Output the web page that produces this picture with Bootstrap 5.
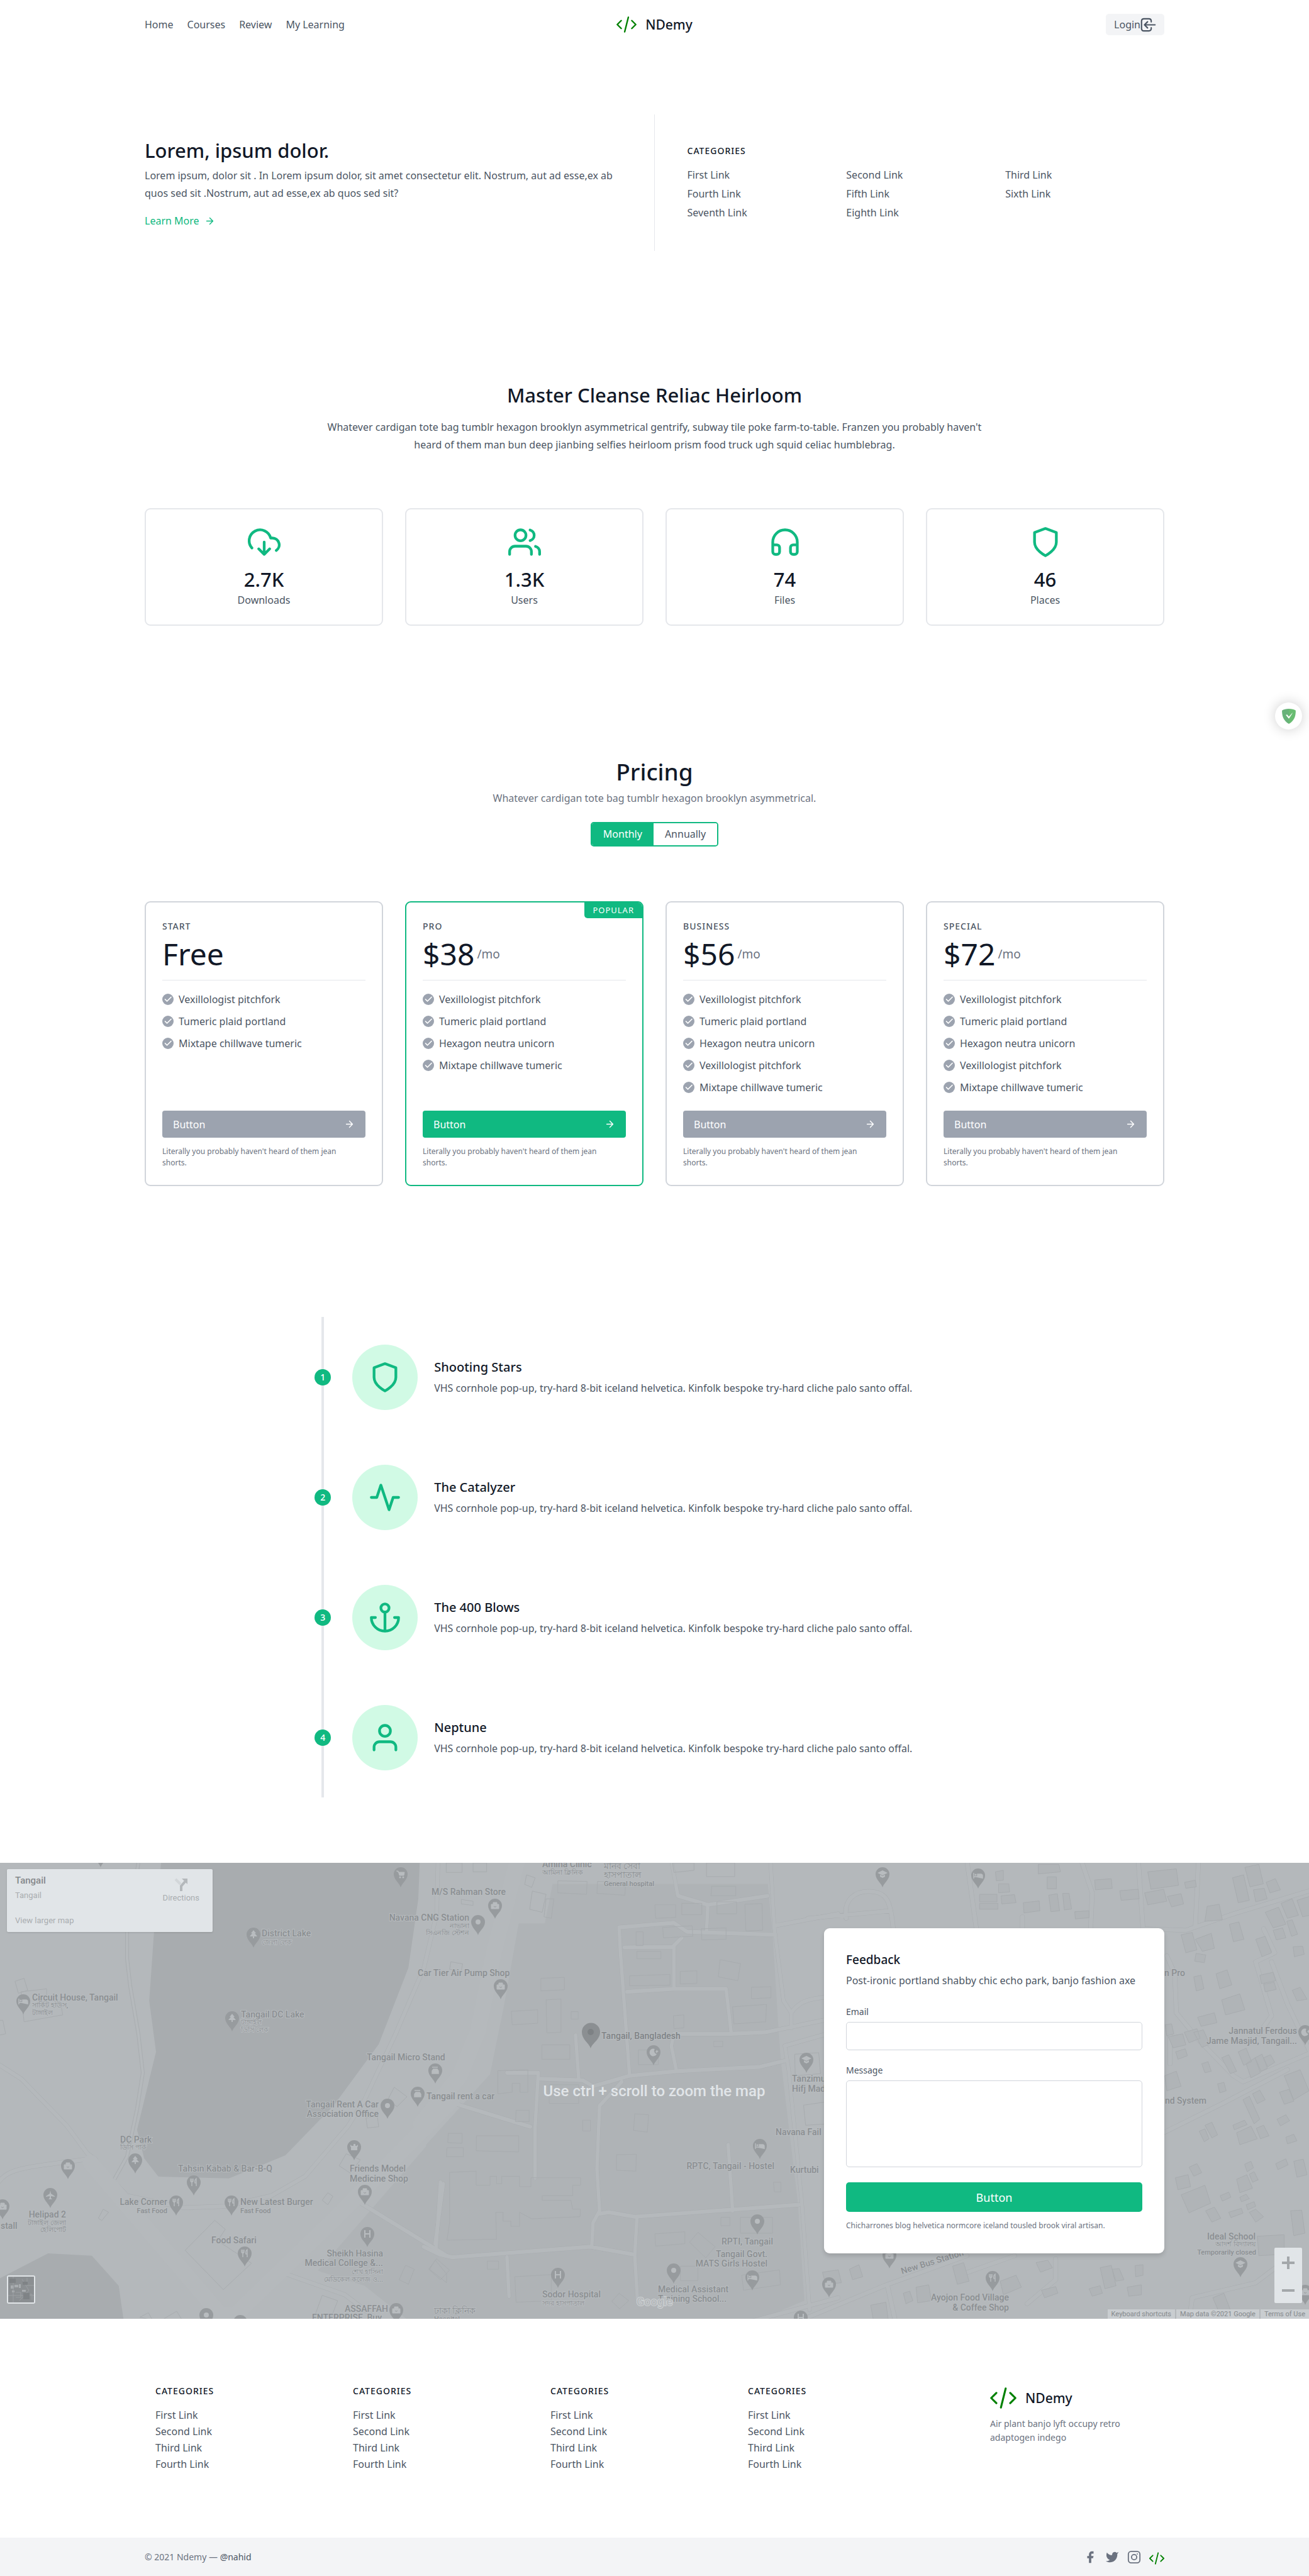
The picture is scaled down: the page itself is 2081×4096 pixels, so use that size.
<!DOCTYPE html>
<html lang="en">
<head>
<meta charset="utf-8">
<meta name="viewport" content="width=device-width, initial-scale=1">
<title>NDemy</title>
<link href="https://cdn.jsdelivr.net/npm/bootstrap@5.3.0/dist/css/bootstrap.min.css" rel="stylesheet">
<style>
:root{--brand:#10b981;--ink:#111827;--body:#4b5563;--soft:#6b7280;--line:#e5e7eb;--edge:#d1d5db;--mute:#9ca3af}
body{font-family:"Noto Sans","Open Sans",sans-serif;font-size:16px;line-height:28px;color:var(--body);background:#fff}
a{color:inherit;text-decoration:none}
h1,h2,h3,p,ul{margin:0}
.wrap{width:100%;max-width:1665px;margin:0 auto;padding:0 22px}
.side{flex:1}
.top-bar{padding-top:22px;padding-bottom:22px}
.top-nav{gap:22px;line-height:34px}
.brand-name{font-size:21px;font-weight:500;line-height:32px;color:var(--ink)}
.brand-link{gap:14px}
.login-btn{height:34px;padding:0 13px;background:#f3f4f6;border:0;border-radius:5px;color:var(--body);font-size:16px;line-height:34px}
.section-gap{padding-top:104px;padding-bottom:104px}
.title-lg{font-size:31px;line-height:42px;font-weight:500;color:var(--ink)}
.title-xl{font-size:37px;line-height:48px;font-weight:500;color:var(--ink)}
.eyebrow{font-size:14px;line-height:22px;font-weight:500;letter-spacing:1px;color:var(--ink)}
.hero-row{min-height:217px}
.hero-left{padding-right:52px;border-right:1px solid var(--line)}
.hero-right{padding-left:52px}
.hero-left h1{margin-bottom:5px}
.more{margin-top:18px;line-height:24px;color:var(--brand);gap:8px}
.cat-links{margin-top:12px;line-height:30px}
.narrow{width:66.667%;margin-left:auto;margin-right:auto}
.grid4{display:grid;grid-template-columns:repeat(4,1fr);gap:35px;margin-top:87px}
.stat{border:2px solid var(--line);border-radius:9px;padding:26px 17px;color:var(--body);line-height:26px}
.stat svg{margin-bottom:14px}
.stat-num{font-size:31px;line-height:39px;font-weight:500;color:var(--ink)}
.ico{fill:none;stroke:currentColor;stroke-width:2;stroke-linecap:round;stroke-linejoin:round;color:var(--brand)}
.toggle{border:2px solid var(--brand);border-radius:5px;height:39px;overflow:hidden}
.toggle button{border:0;background:#fff;color:var(--body);padding:0 18px;font-size:16px;line-height:35px}
.toggle button.on{background:var(--brand);color:#fff}
.plan{border:2px solid var(--edge);border-radius:9px;padding:26px;position:relative;overflow:hidden}
.plan.hot{border-color:var(--brand)}
.plan h3{font-size:14px;line-height:24px;font-weight:500;letter-spacing:1px;color:var(--body)}
.price{font-size:48px;line-height:52px;margin-top:6px;padding-bottom:15px;margin-bottom:18px;border-bottom:1px solid var(--line);color:var(--ink)}
.per{font-size:19px;color:var(--soft);line-height:24px;margin-left:4px}
.perks{list-style:none;padding:0;margin-bottom:25px}
.perks li{line-height:24px;margin-bottom:11px;gap:8px}
.perks li:last-child{margin-bottom:0}
.plan-btn{margin-top:auto;height:43px;border:0;border-radius:4px;background:var(--mute);color:#fff;padding:0 17px;font-size:16px}
.hot .plan-btn,.send{background:var(--brand)}
.fine{font-size:12px;line-height:18px;color:var(--soft)}
.plan .fine{margin-top:13px;padding-right:22px}
.tag{position:absolute;right:0;top:0;background:var(--brand);color:#fff;font-size:13px;line-height:25px;letter-spacing:1px;padding:0 13px;border-bottom-left-radius:5px}
.step{height:191px;gap:26px}
.rail{width:26px;align-self:stretch;background:linear-gradient(var(--line),var(--line)) center/4px 100% no-repeat}
.dot{width:26px;height:26px;border-radius:50%;background:var(--brand);color:#fff;font-size:14px;font-weight:500;line-height:26px}
.disc{width:104px;height:104px;border-radius:50%;background:#d1fae5;margin-left:8px}
.step h3{font-size:20px;line-height:30px;font-weight:500;color:var(--ink);margin-bottom:4px}
.map-zone{position:relative;padding:104px 0;background:#b4b8bb;overflow:hidden}
.map-art{position:absolute;inset:0;width:100%;height:100%;font-family:Roboto,sans-serif}
.map-card{position:absolute;left:11px;top:10px;width:327px;height:100px;background:#e1e5e8;border-radius:2px;box-shadow:0 1px 3px #0002;font-family:Roboto,sans-serif;font-size:13px;line-height:20px;color:#a9adb0;padding:8px 21px 8px 13px}
.map-card strong{font-size:15px;font-weight:500;color:#85898c}
.directions{padding-top:6px}
.zoomer{position:absolute;right:11px;top:612px;width:44px;height:88px;background:#e1e5e8;border-radius:2px}
.zoomer button{border:0;background:none;height:44px;padding:0}
.credits{position:absolute;right:0;bottom:0;font-family:Roboto,sans-serif;font-size:11px;line-height:15px;color:#85898c;gap:2px}
.credits span,.credits a{background:#c9cdd0;padding:0 6px}
.sat{position:absolute;left:11px;bottom:24px;width:45px;height:45px;border:2px solid #e1e5e8;border-radius:3px;background:#8f9396;overflow:hidden}
.sat svg{display:block}
.feedback{width:541px;background:#fff;border-radius:9px;padding:35px;box-shadow:0 4px 7px #0002;position:relative}
.feedback h2{font-size:19px;line-height:30px;font-weight:500;color:var(--ink);margin-bottom:4px}
.feedback .intro{margin-bottom:23px}
.feedback label{display:block;font-size:14px;line-height:26px;margin-bottom:3px}
.feedback .form-control{border:1px solid var(--edge);border-radius:5px;height:45px;margin-bottom:19px}
.feedback textarea.form-control{height:138px;margin-bottom:24px;resize:none}
.feedback .fine{margin-top:13px}
.send{height:47px;border:0;border-radius:5px;color:#fff;font-size:18px}
.foot-col{width:314px;padding:0 17px}
.foot-col ul{list-style:none;padding:0;margin-top:14px;line-height:26px}
.foot-brand{width:277px;font-size:14px;line-height:22px;color:var(--soft);padding-top:5px}
.foot-brand p{margin-top:13px}
.foot-end{background:#f3f4f6;height:61px;font-size:14px;color:var(--soft)}
.foot-end p a{color:var(--body)}
.social{gap:13px}
.guard{position:absolute;right:11px;top:1117px;width:43px;height:43px;border-radius:50%;background:#fff;box-shadow:0 0 20px #0003}
.rd path,.rd{fill:none;stroke-linejoin:round;stroke-linecap:round}
.rd path{vector-effect:non-scaling-stroke}
.casing{stroke:#a9adb0}.paving{stroke:#b5b9bc}
.lot path{fill:#b0b4b7;stroke:#a8acaf;vector-effect:non-scaling-stroke}
.lot .bare{fill:none}
.lab{font-size:14px;font-weight:500;fill:#8b8f92;stroke:#b8bcbf;stroke-width:2px;paint-order:stroke}
.lab .sub{font-size:11px}
.lab .main-place{fill:#7f8386}
.e{text-anchor:end}
</style>
<script src="https://cdn.jsdelivr.net/npm/bootstrap@5.3.0/dist/js/bootstrap.bundle.min.js"></script>
</head>
<body class="position-relative">
<svg width="0" height="0" class="position-absolute" aria-hidden="true">
<defs>
<symbol id="code" viewBox="0 0 132 108"><path d="M31 28 5 54 31 80M78 6 54 102M101 28 127 54 101 80" fill="none" stroke="green" stroke-width="10" stroke-linecap="round" stroke-linejoin="round"/></symbol>
<symbol id="shield" viewBox="0 0 24 24"><path d="M12 22s8-4 8-10V5l-8-3-8 3v7c0 6 8 10 8 10z"/></symbol>
<symbol id="arrow" viewBox="0 0 24 24"><path d="M5 12h14M12 5l7 7-7 7" fill="none" stroke="currentColor" stroke-width="2" stroke-linecap="round" stroke-linejoin="round"/></symbol>
<symbol id="tick" viewBox="0 0 18 18"><circle cx="9" cy="9" r="9" fill="#9ca3af"/><path d="M14 5.500 7.500 12 4.500 9" fill="none" stroke="#fff" stroke-width="1.700" stroke-linecap="round" stroke-linejoin="round"/></symbol>
<g id="pin"><path d="M0 21C-2 14-11 9-11 0A11 11 0 0 1 11 0C11 9 2 14 0 21Z" fill="#979b9e"/></g>
<g id="p-dot"><use href="#pin"/><circle r="4" fill="#b8bcbf"/></g>
<g id="p-bag"><use href="#pin"/><path d="M-6-2H6V5H-6ZM-3-2V-5H3V-2" fill="#b8bcbf" stroke="#b8bcbf"/><path d="M-2 1Q0 4 2 1" fill="none" stroke="#979b9e"/></g>
<g id="p-cart"><use href="#pin"/><path d="M-7-5H-4L-2 2H5L6-3H-4" fill="#b8bcbf" stroke="#b8bcbf"/><circle cx="-1" cy="5" r="1.500" fill="#b8bcbf"/><circle cx="4" cy="5" r="1.500" fill="#b8bcbf"/></g>
<g id="p-tree"><use href="#pin"/><path d="M0-7 4-2H2L6 3H1V6H-1V3H-6L-2-2H-4Z" fill="#b8bcbf"/></g>
<g id="p-bed"><use href="#pin"/><path d="M-7-4V5M-7 2H7V5M-1 1V-2H4Q7-2 7 1Z" fill="#b8bcbf" stroke="#b8bcbf" stroke-width="1.500"/><circle cx="-4" cy="-1" r="1.500" fill="#b8bcbf"/></g>
<g id="p-fork"><use href="#pin"/><path d="M-5-6V-2Q-3 1-1-2V-6M-3-6V6M4 6V-6Q1-4 2 1H4" fill="none" stroke="#b8bcbf" stroke-width="1.500"/></g>
<g id="p-h"><use href="#pin"/><path d="M-4-6V6M4-6V6M-4 0H4" fill="none" stroke="#b8bcbf" stroke-width="2"/></g>
<g id="p-car"><use href="#pin"/><path d="M-5 5V1L-3-2H3L5 1V5ZM-5-5H4" fill="#b8bcbf" stroke="#b8bcbf" stroke-width="1.500"/></g>
<g id="p-cap"><use href="#pin"/><path d="M-8-2 0-6 8-2 0 2ZM-4 1V4L0 6 4 4V1L0 3ZM7-2V4" fill="#b8bcbf"/></g>
<g id="p-moon"><use href="#pin"/><path d="M2-5A6 6 0 1 0 5 3A5 5 0 0 1 2-5ZM5-4 6-2H8L6 0 5 2 4 0 2-1H4Z" fill="#b8bcbf"/></g>
<g id="p-plane"><use href="#pin"/><path d="M0-7 1-2 7 2V3L1 2V5L3 7H-3L-1 5V2L-7 3V2L-1-2Z" fill="#b8bcbf"/></g>
<g id="p-pot"><use href="#pin"/><path d="M-6-4-4-2H4L6-4V-1L5 0V5H-5V0L-6-1ZM-1-5H2V-2H-1Z" fill="#b8bcbf"/></g>
</defs>
</svg>

<header class="wrap top-bar d-flex align-items-center">
  <nav class="side top-nav d-flex"><a href="#">Home</a><a href="#">Courses</a><a href="#">Review</a><a href="#">My Learning</a></nav>
  <a href="#" class="brand-link d-flex align-items-center"><svg width="32" height="26"><use href="#code"/></svg><span class="brand-name">NDemy</span></a>
  <div class="side d-flex justify-content-end"><button type="button" class="login-btn d-flex align-items-center">Login<svg width="25" height="23" viewBox="380 98 128 116" fill="none" stroke="currentColor" stroke-width="11" stroke-linecap="round" stroke-linejoin="round"><path d="M468 132V126Q468 107 449 107H409Q389 107 389 127V185Q389 205 409 205H449Q468 205 468 186V180M499 156H414M438 131 413 156 438 181"/></svg></button></div>
</header>

<main>
<section class="wrap section-gap">
  <div class="row g-0 hero-row">
    <div class="col-6 hero-left d-flex flex-column justify-content-center">
      <h1 class="title-lg">Lorem, ipsum dolor.</h1>
      <p>Lorem ipsum, dolor sit . In Lorem ipsum dolor, sit amet consectetur elit. Nostrum, aut ad esse,ex ab quos sed sit .Nostrum, aut ad esse,ex ab quos sed sit?</p>
      <a href="#" class="more d-inline-flex align-items-center align-self-start">Learn More<svg width="17" height="17"><use href="#arrow"/></svg></a>
    </div>
    <div class="col-6 hero-right d-flex flex-column justify-content-center">
      <h2 class="eyebrow">CATEGORIES</h2>
      <div class="row g-0 cat-links">
        <a href="#" class="col-4">First Link</a><a href="#" class="col-4">Second Link</a><a href="#" class="col-4">Third Link</a>
        <a href="#" class="col-4">Fourth Link</a><a href="#" class="col-4">Fifth Link</a><a href="#" class="col-4">Sixth Link</a>
        <a href="#" class="col-4">Seventh Link</a><a href="#" class="col-4">Eighth Link</a>
      </div>
    </div>
  </div>
</section>

<section class="wrap section-gap text-center">
  <h2 class="title-lg mb-3">Master Cleanse Reliac Heirloom</h2>
  <p class="narrow">Whatever cardigan tote bag tumblr hexagon brooklyn asymmetrical gentrify, subway tile poke farm-to-table. Franzen you probably haven't heard of them man bun deep jianbing selfies heirloom prism food truck ugh squid celiac humblebrag.</p>
  <div class="grid4">
    <div class="stat"><svg class="ico" width="52" height="52" viewBox="0 0 24 24"><path d="M8 17l4 4 4-4M12 12v9M20.880 18.090A5 5 0 0 0 18 9h-1.260A8 8 0 1 0 3 16.290"/></svg><div class="stat-num">2.7K</div><div>Downloads</div></div>
    <div class="stat"><svg class="ico" width="52" height="52" viewBox="0 0 24 24"><path d="M17 21v-2a4 4 0 0 0-4-4H5a4 4 0 0 0-4 4v2M23 21v-2a4 4 0 0 0-3-3.870M16 3.130a4 4 0 0 1 0 7.750"/><circle cx="9" cy="7" r="4"/></svg><div class="stat-num">1.3K</div><div>Users</div></div>
    <div class="stat"><svg class="ico" width="52" height="52" viewBox="0 0 24 24"><path d="M3 18v-6a9 9 0 0 1 18 0v6M21 19a2 2 0 0 1-2 2h-1a2 2 0 0 1-2-2v-3a2 2 0 0 1 2-2h3zM3 19a2 2 0 0 0 2 2h1a2 2 0 0 0 2-2v-3a2 2 0 0 0-2-2H3z"/></svg><div class="stat-num">74</div><div>Files</div></div>
    <div class="stat"><svg class="ico" width="52" height="52"><use href="#shield"/></svg><div class="stat-num">46</div><div>Places</div></div>
  </div>
</section>

<section class="wrap section-gap">
  <div class="text-center">
    <h2 class="title-xl">Pricing</h2>
    <p class="mt-1" style="color:var(--soft)">Whatever cardigan tote bag tumblr hexagon brooklyn asymmetrical.</p>
    <div class="toggle d-inline-flex align-top mt-4"><button type="button" class="on">Monthly</button><button type="button">Annually</button></div>
  </div>
  <div class="grid4">
    <div class="plan d-flex flex-column"><h3>START</h3><div class="price">Free</div>
      <ul class="perks"><li class="d-flex align-items-center"><svg width="18" height="18"><use href="#tick"/></svg>Vexillologist pitchfork</li><li class="d-flex align-items-center"><svg width="18" height="18"><use href="#tick"/></svg>Tumeric plaid portland</li><li class="d-flex align-items-center"><svg width="18" height="18"><use href="#tick"/></svg>Mixtape chillwave tumeric</li></ul>
      <button type="button" class="plan-btn d-flex align-items-center justify-content-between">Button<svg width="17" height="17"><use href="#arrow"/></svg></button><p class="fine">Literally you probably haven't heard of them jean shorts.</p></div>
    <div class="plan hot d-flex flex-column"><span class="tag">POPULAR</span><h3>PRO</h3><div class="price d-flex align-items-center">$38<span class="per">/mo</span></div>
      <ul class="perks"><li class="d-flex align-items-center"><svg width="18" height="18"><use href="#tick"/></svg>Vexillologist pitchfork</li><li class="d-flex align-items-center"><svg width="18" height="18"><use href="#tick"/></svg>Tumeric plaid portland</li><li class="d-flex align-items-center"><svg width="18" height="18"><use href="#tick"/></svg>Hexagon neutra unicorn</li><li class="d-flex align-items-center"><svg width="18" height="18"><use href="#tick"/></svg>Mixtape chillwave tumeric</li></ul>
      <button type="button" class="plan-btn d-flex align-items-center justify-content-between">Button<svg width="17" height="17"><use href="#arrow"/></svg></button><p class="fine">Literally you probably haven't heard of them jean shorts.</p></div>
    <div class="plan d-flex flex-column"><h3>BUSINESS</h3><div class="price d-flex align-items-center">$56<span class="per">/mo</span></div>
      <ul class="perks"><li class="d-flex align-items-center"><svg width="18" height="18"><use href="#tick"/></svg>Vexillologist pitchfork</li><li class="d-flex align-items-center"><svg width="18" height="18"><use href="#tick"/></svg>Tumeric plaid portland</li><li class="d-flex align-items-center"><svg width="18" height="18"><use href="#tick"/></svg>Hexagon neutra unicorn</li><li class="d-flex align-items-center"><svg width="18" height="18"><use href="#tick"/></svg>Vexillologist pitchfork</li><li class="d-flex align-items-center"><svg width="18" height="18"><use href="#tick"/></svg>Mixtape chillwave tumeric</li></ul>
      <button type="button" class="plan-btn d-flex align-items-center justify-content-between">Button<svg width="17" height="17"><use href="#arrow"/></svg></button><p class="fine">Literally you probably haven't heard of them jean shorts.</p></div>
    <div class="plan d-flex flex-column"><h3>SPECIAL</h3><div class="price d-flex align-items-center">$72<span class="per">/mo</span></div>
      <ul class="perks"><li class="d-flex align-items-center"><svg width="18" height="18"><use href="#tick"/></svg>Vexillologist pitchfork</li><li class="d-flex align-items-center"><svg width="18" height="18"><use href="#tick"/></svg>Tumeric plaid portland</li><li class="d-flex align-items-center"><svg width="18" height="18"><use href="#tick"/></svg>Hexagon neutra unicorn</li><li class="d-flex align-items-center"><svg width="18" height="18"><use href="#tick"/></svg>Vexillologist pitchfork</li><li class="d-flex align-items-center"><svg width="18" height="18"><use href="#tick"/></svg>Mixtape chillwave tumeric</li></ul>
      <button type="button" class="plan-btn d-flex align-items-center justify-content-between">Button<svg width="17" height="17"><use href="#arrow"/></svg></button><p class="fine">Literally you probably haven't heard of them jean shorts.</p></div>
  </div>
</section>

<section class="wrap section-gap">
  <div class="narrow">
    <div class="step d-flex align-items-center"><div class="rail d-flex align-items-center"><span class="dot text-center">1</span></div><div class="disc d-flex align-items-center justify-content-center"><svg class="ico" width="52" height="52"><use href="#shield"/></svg></div><div><h3>Shooting Stars</h3><p>VHS cornhole pop-up, try-hard 8-bit iceland helvetica. Kinfolk bespoke try-hard cliche palo santo offal.</p></div></div>
    <div class="step d-flex align-items-center"><div class="rail d-flex align-items-center"><span class="dot text-center">2</span></div><div class="disc d-flex align-items-center justify-content-center"><svg class="ico" width="52" height="52" viewBox="0 0 24 24"><path d="M22 12h-4l-3 9L9 3l-3 9H2"/></svg></div><div><h3>The Catalyzer</h3><p>VHS cornhole pop-up, try-hard 8-bit iceland helvetica. Kinfolk bespoke try-hard cliche palo santo offal.</p></div></div>
    <div class="step d-flex align-items-center"><div class="rail d-flex align-items-center"><span class="dot text-center">3</span></div><div class="disc d-flex align-items-center justify-content-center"><svg class="ico" width="52" height="52" viewBox="0 0 24 24"><circle cx="12" cy="5" r="3"/><path d="M12 22V8M5 12H2a10 10 0 0 0 20 0h-3"/></svg></div><div><h3>The 400 Blows</h3><p>VHS cornhole pop-up, try-hard 8-bit iceland helvetica. Kinfolk bespoke try-hard cliche palo santo offal.</p></div></div>
    <div class="step d-flex align-items-center"><div class="rail d-flex align-items-center"><span class="dot text-center">4</span></div><div class="disc d-flex align-items-center justify-content-center"><svg class="ico" width="52" height="52" viewBox="0 0 24 24"><path d="M20 21v-2a4 4 0 0 0-4-4H8a4 4 0 0 0-4 4v2"/><circle cx="12" cy="7" r="4"/></svg></div><div><h3>Neptune</h3><p>VHS cornhole pop-up, try-hard 8-bit iceland helvetica. Kinfolk bespoke try-hard cliche palo santo offal.</p></div></div>
  </div>
</section>

<section class="map-zone">
  <svg class="map-art" viewBox="0 0 2081 726" preserveAspectRatio="xMinYMin slice" role="img" aria-label="Map of Tangail">
    <defs>
      <g id="west" transform="translate(0 -14.300) scale(.4493 .4769)">
        <path d="M0 705 75 750 235 905 310 1000 340 1020M-10 1100C30 1050 60 1048 310 1018M420 1110 450 1140 650 1180 800 1175 960 1140 1080 1075 1230 910 1290 820 1400 600 1500 380 1545 200 1550 20"/>
        <path d="M1010 1400 1220 1470 1360 1570M1260 1155 1580 1340M1568 1100 1540 1300"/>
        <path d="M320 1030 780 1535 830 1540 1180 1220 1600 820" stroke-width="26"/>
      </g>
      <g id="mid" transform="translate(677.400 -14.300) scale(.4147 .4769)">
        <path d="M-20 900 130 740 200 590 260 330 350 20" stroke-width="28"/>
        <path d="M940 20 965 140 1080 170 1310 140M1080 170 1075 260M780 740 745 330 740 245 950 230 1000 260 1340 270M760 312 945 310 980 280M950 310V450M770 460 950 450 1150 450 1170 600M960 725 940 640 950 600 1170 600 1300 595 1580 545M1320 20 1335 250 1370 490 1400 530V580M1335 240 1580 200M1400 530C1430 490 1470 480 1580 475M573 605 585 750M440 750 600 755 640 775 780 740 960 725 1280 710 1375 690M100 830 400 910M310 730 430 730 418 910V1080M750 760 665 840 655 1050 665 1190 640 1230 635 1310M665 1200 700 1195 800 1210 1430 1170M-10 1310 50 1335 100 1345 630 1310 790 1335M808 1215 800 1340 810 1485M55 1095 38 1320M310 1345 318 1475M1158 970 1175 1190M1200 1570 1580 1480"/>
        <path d="M1580 590 1375 640 1390 720 1440 1160 1470 1520" />
      </g>
      <g id="east" transform="translate(1289.800 -14.300) scale(.5046 .4769)">
        <path d="M-10 215 250 190M110 215C100 150 140 125 180 125 240 125 250 160 258 250M490 20 520 250M665 210V260M850 20 885 130 880 250M1030 20 1045 250 1180 255 1330 200 1580 120M1220 20 1210 240M1120 340 1145 400 1150 530 1220 620 1330 740 1360 760 1580 660M1425 250 1460 330 1400 360 1450 540 1410 600M1450 360 1500 500 1580 680M1100 935 1300 830 1500 720M-10 1545 230 1440 490 1340M240 1440 265 1560M480 1400 640 1340M770 1350V1420L680 1500M1190 1560 1200 1480 1400 1430 1500 1350M1130 580V700"/>
      </g>
    </defs>
    <g transform="translate(0 -14.300) scale(.4493 .4769)">
      <path fill="#a8acaf" d="M570 30H1485L1480 150 1445 380 1340 635 1180 840 1010 1005 920 1040 810 1082 560 1076 510 1015 485 920 552 660 528 490 545 260ZM0 1415 170 1332 325 1340 420 1440 437 1552H0Z"/>
      <path fill="#afb3b6" d="M1568 910 1125 1390 1290 1440 1440 1552H1600V880Z"/>
    </g>
    <path fill="#afb3b6" transform="translate(677.400 -14.300) scale(.4147 .4769)" d="M485 100H1310L1330 290 1350 570 1360 690 1425 1160 1450 1490 1280 1552H0V970L245 735 300 500 355 232H455Z"/>
    <g class="rd casing" stroke-width="15"><use href="#west"/><use href="#mid"/><use href="#east"/></g>
    <g class="rd paving" stroke-width="13"><use href="#west"/><use href="#mid"/><use href="#east"/></g>
    <g class="rd paving"><path stroke-width="25" d="M144 477 350 718 373 720 530 568 719 377M669 415 731 339 760 267 785 143 823-5" /></g>
    <path d="M220 0 202 110V152L207 196 220 272 227 334 218 391 202 467 182 503" fill="none" stroke="#a9adb0" stroke-width="6"/>
    <path d="M220 0 202 110V152L207 196 220 272 227 334 218 391 202 467 182 503" fill="none" stroke="#b5b9bc" stroke-width="4"/>
    <g class="lot" transform="translate(0 -14.300) scale(.4493 .4769)"><path class="bare" d="M53 425 85 415 98 455 65 465ZM75 460 165 450V480L215 500 222 537 85 560ZM-5 555H10L20 600-5 605ZM365 1185 384 1195 360 1223 348 1215ZM760 1222 797 1252 770 1290 890 1365 790 1453 655 1322ZM1395 778 1440 810 1405 843 1372 820ZM1295 880 1335 875 1340 910 1300 914ZM1225 1000 1275 1020 1240 1065 1200 1040ZM1160 1130 1178 1142 1160 1170 1140 1155ZM1435 1372 1466 1385 1445 1435 1412 1420ZM1540 1355 1580 1400V1430L1520 1385ZM1140 1472 1195 1490 1170 1550H1110ZM495 1545 525 1530 540 1555ZM580 1550 625 1525 645 1555Z"/></g>
    <g class="lot" transform="translate(677.400 -14.300) scale(.4147 .4769)"><path class="bare" d="M77 30H138V62H77ZM180 30H232V60H180ZM385 70 418 80 405 112 378 102ZM407 124 460 135 445 195 397 185ZM460 150H490L480 215 452 210ZM135 152 180 158V172L135 167ZM505 90 617 92 615 135 505 130ZM657 92 765 95 762 138 655 132ZM945 30H1027V55L950 62ZM1075 30H1183V76H1075ZM1095 108H1187V140H1092ZM877 170H957V212L880 215ZM980 165H1057V203H980ZM1115 160H1190V200H1115ZM1222 168 1288 166 1290 255 1226 257ZM907 245 1020 240 1022 275 910 280ZM1055 250 1150 247V285L1057 287ZM805 260H832V306H805ZM780 407 935 402V438L780 440ZM808 325H900V350H808ZM974 392 1038 390V432L974 434ZM1127 353 1205 366 1195 423 1120 410ZM1247 445 1322 443V480L1247 483ZM1175 510 1305 502 1302 560 1180 567ZM440 415 530 412V453L440 457ZM460 487 517 484V595L463 597ZM327 525 428 520V565L330 570ZM556 526H583V551H556ZM444 637H551V685H444ZM948 540 988 537V580L950 583ZM814 654H890V703H814ZM1103 625H1137V643H1103ZM275 723 390 720V795H360V765H330V795L275 800ZM472 770H585V832H472ZM345 855H395V893H343ZM600 888H630V924H600ZM800 867 853 870 848 928 795 922ZM730 1003 806 1002 804 1058 730 1055ZM193 940H355V994L192 990ZM85 932H138V965L83 963ZM80 980H143V1010H78ZM90 1062 192 1058V1105H245V1075H270V1100H290V1075H358V1110H402V1080H592V1105H562V1140H445V1155H555L562 1185H592L590 1210 405 1217 358 1195V1242H325V1225H295V1195H267L270 1285 80 1288 90 1230V1140ZM877 1267 992 1260V1300L880 1308ZM1042 1262 1108 1310 1072 1347 1010 1295ZM1130 1212H1165V1240H1130ZM1205 1212H1328V1265H1205ZM975 1375H1042V1423H975ZM1210 1405 1355 1387 1358 1437 1217 1455ZM40 1350 90 1388 55 1420 10 1385ZM235 1358H278V1385H235ZM340 1410 480 1403V1490L345 1495ZM740 1465 777 1490 742 1517 712 1492ZM95 360 140 367 135 390 90 385ZM1332 1095H1360V1127H1335ZM1447 838 1550 825V900L1455 905ZM1413 668 1505 663 1512 733 1415 740Z"/></g>
    <g class="lot" transform="translate(1289.800 -14.300) scale(.5046 .4769)"><path d="M580 60 605 55V88L583 90ZM590 100H622L625 127 590 130ZM530 135H585V160H530ZM598 140 640 136 645 163 600 167ZM530 165H588V185H530ZM668 163 718 157 720 190 670 197ZM748 138 775 133 782 190 755 193ZM792 132H812L820 184 797 187ZM743 77H772V117H743ZM715 35H780L785 60 715 67ZM830 193 875 190V213L832 217ZM893 87 945 83 948 115 895 120ZM972 123 1030 118 1033 150 976 155ZM1060 60 1150 50 1157 105 1070 118ZM1050 130 1110 118 1120 158 1060 170ZM1122 142 1165 133 1173 167 1135 177ZM1176 95 1210 88 1213 110 1180 115ZM1327 80 1362 70 1380 155 1345 163ZM1366 45 1410 35 1424 100 1382 110ZM1393 120 1427 115 1436 150 1400 160ZM1247 175 1285 168 1295 220 1240 225ZM1430 195 1472 178 1495 235 1455 247ZM1480 165 1515 150 1535 205 1500 215ZM1530 155 1570 142V205L1548 210ZM1317 235 1347 227 1363 285 1330 293ZM1165 270 1200 262 1215 320 1180 330ZM1210 285 1260 265 1270 315 1232 325ZM1212 332 1243 337 1238 363 1208 358ZM1400 285 1430 275 1450 330 1420 343ZM1275 400 1310 387 1325 437 1287 450ZM1205 410 1228 405 1237 450 1213 457ZM1293 487 1350 467 1366 520 1305 537ZM1413 405 1455 395 1463 423 1418 433ZM1425 435 1458 428 1465 452 1430 460ZM1217 545 1270 530 1278 563 1228 575ZM1115 570 1135 567 1142 600 1120 607ZM1125 610 1170 600 1180 637 1140 647ZM1175 595 1215 583 1225 615 1190 630ZM1205 595 1235 587 1255 635 1230 645ZM1148 660 1178 650 1185 673 1155 685ZM1230 700 1250 693 1260 725 1240 730ZM1293 680 1315 670 1340 725 1320 733ZM1345 660 1370 648 1387 693 1362 705ZM1370 700 1398 680 1415 730 1385 747ZM1398 680 1420 668 1437 715 1417 725ZM1425 680 1447 670 1460 695 1438 710ZM1113 740 1150 725 1165 775 1120 790ZM1280 767 1300 762 1307 790 1287 797ZM1360 820 1380 808 1413 885 1395 900ZM1390 800 1413 788 1430 820 1405 833ZM1328 905 1365 888 1373 903 1333 920ZM1340 930 1385 908 1405 950 1350 970ZM1402 915 1425 905 1442 940 1415 950ZM1240 905 1262 895 1280 937 1262 947ZM1222 925 1240 917 1253 950 1238 960ZM1467 885 1495 870 1507 890 1478 907ZM1490 740 1540 720 1568 790 1520 820ZM1475 795 1505 785 1520 825 1490 835ZM1495 945 1520 935 1530 957 1500 967ZM1463 1033 1495 1017 1502 1037 1470 1053ZM1365 1035 1385 1025 1393 1047 1373 1060ZM1190 1045 1215 1033 1230 1063 1205 1075ZM1147 1080 1187 1070 1195 1110 1155 1120ZM1165 1137 1240 1105 1258 1165 1190 1197ZM1340 1085 1372 1070 1390 1115 1350 1130ZM1380 1068 1395 1060 1408 1087 1390 1095ZM1350 1145 1370 1135 1380 1150 1355 1160ZM1288 1140 1315 1128 1322 1145 1295 1158ZM1370 1170 1395 1160 1400 1175 1375 1187ZM1315 1195 1355 1182 1360 1198 1322 1213ZM1242 1190 1270 1178 1290 1215 1262 1228ZM1380 1195 1400 1185 1425 1210 1400 1228ZM1510 1190 1545 1188 1555 1265 1520 1273ZM1520 1025 1550 1018 1562 1070 1530 1078ZM1405 1275 1490 1270V1335L1410 1340ZM445 1375 480 1363 497 1425 460 1435ZM595 1425 645 1405 662 1445 605 1470ZM708 1363 745 1355 760 1380 722 1395ZM725 1455 770 1443 777 1465 735 1480ZM120 1385 150 1370 162 1410 130 1420ZM35 1395 85 1387 95 1430 45 1435ZM187 1505 235 1495 242 1552H195ZM330 1445 370 1437 378 1490 335 1497ZM290 1465 310 1458 320 1490 298 1500ZM910 1380 945 1372 960 1440 925 1450ZM948 1385 970 1383 985 1420 960 1425ZM1020 1373 1045 1370V1405L1022 1410ZM995 1445 1040 1437V1470L1000 1475ZM875 1450 910 1440 917 1465 885 1475ZM1265 1480 1300 1465 1320 1520 1285 1530ZM1518 310 1548 308 1553 335 1522 343ZM1515 455 1540 445 1562 485 1530 490ZM1455 255 1485 247 1495 280 1465 287ZM1498 225 1515 220 1532 268 1513 275ZM1433 95 1462 83 1478 120 1445 130Z"/></g>
    <g>
      <use href="#p-cart" x="160" y="-14"/><use href="#p-cart" x="637" y="18"/><use href="#p-tree" x="403" y="114"/><use href="#p-tree" x="369" y="247"/><use href="#p-bed" x="37" y="220"/><use href="#p-bag" x="108" y="482"/><use href="#p-plane" x="80" y="528"/><use href="#p-bag" x="4" y="546"/><use href="#p-tree" x="215" y="473"/><use href="#p-fork" x="308" y="508"/><use href="#p-fork" x="280" y="540"/><use href="#p-fork" x="368" y="540"/><use href="#p-fork" x="389" y="621"/><use href="#p-h" x="584" y="590"/><use href="#p-dot" x="616" y="386"/><use href="#p-pot" x="563" y="452"/><use href="#p-bag" x="580" y="523"/><use href="#p-car" x="664" y="367"/><use href="#p-car" x="692" y="330"/><use href="#p-dot" x="328" y="719"/><use href="#p-dot" x="382" y="730"/><use href="#p-bag" x="630" y="711"/>
      <use href="#p-bag" x="787" y="68"/><use href="#p-dot" x="760" y="94"/><use href="#p-bag" x="796" y="196"/><use href="#p-moon" x="1039" y="301"/><use href="#p-cap" x="1282" y="313"/><use href="#p-bed" x="1208" y="450"/><use href="#p-dot" x="1204" y="570"/><use href="#p-dot" x="1071" y="648"/><use href="#p-bed" x="1196" y="659"/><use href="#p-h" x="887" y="655"/><use href="#p-bag" x="1318" y="670"/><use href="#p-h" x="1273" y="723"/>
      <path d="M939 295C936 286 925 281 925 269A14 14 0 0 1 954 269C954 281 942 286 939 295Z" fill="#8b8f92"/><circle cx="939" cy="269" r="5" fill="#7d8184"/>
      <use href="#p-cap" x="1403" y="18"/><use href="#p-bed" x="1555" y="20"/><use href="#p-bag" x="1414" y="624"/><use href="#p-fork" x="1578" y="660"/><use href="#p-cap" x="1972" y="638"/><use href="#p-moon" x="2075" y="269"/><use href="#p-bag" x="2075" y="682"/>
    </g>
    <g class="lab">
      <text x="416" y="117">District Lake</text><text x="51" y="219">Circuit House, Tangail</text><text x="383" y="246">Tangail DC Lake</text><text x="191" y="445">DC Park</text><text x="283" y="491">Tahsin Kabab &amp; Bar-B-Q</text><text class="e" x="266" y="544">Lake Corner</text><text x="382" y="544">New Latest Burger</text><text class="e" x="105" y="564">Helipad 2</text><text x="1" y="582">stall</text><text x="336" y="605">Food Safari</text><text class="e" x="602" y="389">Tangail Rent A Car</text><text class="e" x="602" y="404">Association Office</text><text x="556" y="491">Friends Model</text><text x="556" y="507">Medicine Shop</text><text class="e" x="609" y="626">Sheikh Hasina</text><text class="e" x="609" y="641">Medical College &amp;...</text><text class="e" x="617" y="714">ASSAFFAH</text><text class="e" x="607" y="728">ENTERPRISE, Buy</text><text x="583" y="314">Tangail Micro Stand</text><text x="678" y="376">Tangail rent a car</text><text class="e" x="746" y="92">Navana CNG Station</text><text x="664" y="180">Car Tier Air Pump Shop</text><text x="686" y="51">M/S Rahman Store</text>
      <text x="862" y="7">Amina Clinic</text><text x="956" y="280" class="main-place">Tangail, Bangladesh</text><text class="e" x="1231" y="487">RPTC, Tangail - Hostel</text><text x="1233" y="433">Navana Fail</text><text x="1256" y="493">Kurtubi</text><text x="1259" y="348">Tanzimul</text><text x="1259" y="364">Hifj Mad</text><text class="e" x="1229" y="607">RPTI, Tangail</text><text class="e" x="1220" y="627">Tangail Govt.</text><text class="e" x="1220" y="642">MATS Girls Hostel</text><text x="1046" y="683">Medical Assistant</text><text x="1046" y="698">Training School...</text><text x="862" y="691">Sodor Hospital</text><text x="960" y="10">মানব সেবা</text><text x="960" y="24">হাসপাতাল</text><text x="690" y="717">ঢাকা ক্লিনিক</text>
      <text class="e" x="1884" y="180">n Pro</text><text class="e" x="1918" y="383">nd System</text><text class="e" x="2062" y="272">Jannatul Ferdous</text><text class="e" x="2062" y="288">Jame Masjid, Tangail...</text><text class="e" x="1996" y="599">Ideal School</text><text class="e" x="1604" y="696">Ayojon Food Village</text><text class="e" x="1604" y="712">&amp; Coffee Shop</text><text transform="translate(1434 654) rotate(-17)">New Bus Station</text>
      <g class="sub"><text x="416" y="130">জেলা লেক</text><text x="51" y="230">সার্কিট হাউস,</text><text x="51" y="242">টাঙ্গাইল</text><text x="383" y="257">টাঙ্গাইল</text><text x="383" y="269">ডিসি লেক</text><text x="191" y="456">ডিসি পার্ক</text><text class="e" x="266" y="557">Fast Food</text><text x="382" y="557">Fast Food</text><text class="e" x="105" y="576">টাঙ্গাইল জেলা</text><text class="e" x="105" y="587">হেলিপোর্ট</text><text class="e" x="609" y="654">শেখ হাসিনা</text><text class="e" x="609" y="666">মেডিকেল কলেজ ও...</text><text class="e" x="746" y="104">নাভানা</text><text class="e" x="746" y="115">সিএনজি স্টেশন</text><text x="862" y="19">আমিনা ক্লিনিক</text><text x="960" y="37">General hospital</text><text x="862" y="704">সদর হাসপাতাল</text><text x="690" y="729">Hospital</text><text class="e" x="1996" y="610">আদর্শ বিদ্যালয়</text><text class="e" x="1997" y="623">Temporarily closed</text></g>
    </g>
    <text x="1040" y="371" text-anchor="middle" font-size="24" font-weight="500" fill="#e1e5e8">Use ctrl + scroll to zoom the map</text>
    <text x="1012" y="704" font-size="18" font-weight="500" fill="#b4b8bb" stroke="#cdd1d3" stroke-width="2" paint-order="stroke">Google</text>
  </svg>
  <div class="map-card d-flex justify-content-between">
    <div class="d-flex flex-column"><strong>Tangail</strong><span class="mt-1">Tangail</span><a href="#" class="mt-auto">View larger map</a></div>
    <a href="#" class="directions text-center"><svg class="d-block mx-auto" width="22" height="22" viewBox="0 0 22 22" fill="none" stroke-width="4"><path d="M2 2 10 10" stroke="#d2d6d9"/><path d="M11 21V13L18 5" stroke="#b4b8bb"/><path d="M12 1H21V10Z" fill="#b4b8bb"/></svg>Directions</a>
  </div>
  <div class="sat"><svg width="41" height="41" viewBox="0 0 41 41"><path d="M0 0H41V41H0Z" fill="#8b8f92"/><path d="M4 14H9V19H4ZM10 13H16V17H10ZM17 12H20V18H17ZM6 22H10V25H6ZM22 21H28V24H22Z" fill="#a9adb0"/><path d="M0 30H41M8 0V41M22 4 33 22 18 38M30 2V14H41M12 25H20V33H12M28 28H38V37" fill="none" stroke="#9ca0a3"/><path d="M2 3H12V10H2ZM23 8H31V13H23ZM24 26H34V36H24Z" fill="#7f8386"/></svg></div>
  <div class="zoomer d-flex flex-column"><button type="button" aria-label="Zoom in"><svg width="20" height="20" viewBox="0 0 20 20" stroke="#a3a7aa" stroke-width="4"><path d="M0 10H20M10 0V20"/></svg></button><button type="button" aria-label="Zoom out"><svg width="20" height="20" viewBox="0 0 20 20" stroke="#a3a7aa" stroke-width="4"><path d="M0 10H20"/></svg></button></div>
  <div class="credits d-flex"><a href="#">Keyboard shortcuts</a><span>Map data ©2021 Google</span><a href="#">Terms of Use</a></div>
  <div class="wrap d-flex justify-content-end">
    <form class="feedback d-flex flex-column">
      <h2>Feedback</h2>
      <p class="intro">Post-ironic portland shabby chic echo park, banjo fashion axe</p>
      <label for="email">Email</label><input id="email" type="email" class="form-control">
      <label for="message">Message</label><textarea id="message" class="form-control"></textarea>
      <button type="button" class="send">Button</button>
      <p class="fine">Chicharrones blog helvetica normcore iceland tousled brook viral artisan.</p>
    </form>
  </div>
</section>
</main>

<footer>
  <div class="wrap section-gap d-flex justify-content-between">
    <div class="d-flex">
      <div class="foot-col"><h2 class="eyebrow">CATEGORIES</h2><ul><li><a href="#">First Link</a></li><li><a href="#">Second Link</a></li><li><a href="#">Third Link</a></li><li><a href="#">Fourth Link</a></li></ul></div>
      <div class="foot-col"><h2 class="eyebrow">CATEGORIES</h2><ul><li><a href="#">First Link</a></li><li><a href="#">Second Link</a></li><li><a href="#">Third Link</a></li><li><a href="#">Fourth Link</a></li></ul></div>
      <div class="foot-col"><h2 class="eyebrow">CATEGORIES</h2><ul><li><a href="#">First Link</a></li><li><a href="#">Second Link</a></li><li><a href="#">Third Link</a></li><li><a href="#">Fourth Link</a></li></ul></div>
      <div class="foot-col"><h2 class="eyebrow">CATEGORIES</h2><ul><li><a href="#">First Link</a></li><li><a href="#">Second Link</a></li><li><a href="#">Third Link</a></li><li><a href="#">Fourth Link</a></li></ul></div>
    </div>
    <div class="foot-brand"><a href="#" class="brand-link d-flex align-items-center"><svg width="42" height="34"><use href="#code"/></svg><span class="brand-name">NDemy</span></a><p>Air plant banjo lyft occupy retro adaptogen indego</p></div>
  </div>
  <div class="foot-end d-flex align-items-center"><div class="wrap d-flex align-items-center justify-content-between">
    <p>© 2021 Ndemy — <a href="#">@nahid</a></p>
    <div class="social d-flex align-items-center">
      <a href="#" aria-label="Facebook"><svg class="d-block" width="22" height="22" viewBox="0 0 24 24" fill="currentColor"><path d="M18 2h-3a5 5 0 0 0-5 5v3H7v4h3v8h4v-8h3l1-4h-4V7a1 1 0 0 1 1-1h3z"/></svg></a>
      <a href="#" aria-label="Twitter"><svg class="d-block" width="22" height="22" viewBox="0 0 24 24" fill="currentColor"><path d="M23 3a10.900 10.900 0 0 1-3.140 1.530 4.480 4.480 0 0 0-7.860 3v1A10.660 10.660 0 0 1 3 4s-4 9 5 13a11.640 11.640 0 0 1-7 2c9 5 20 0 20-11.500a4.500 4.500 0 0 0-.080-.830A7.720 7.720 0 0 0 23 3z"/></svg></a>
      <a href="#" aria-label="Instagram"><svg class="d-block" width="22" height="22" viewBox="0 0 24 24" fill="none" stroke="currentColor" stroke-width="2" stroke-linecap="round"><rect x="2" y="2" width="20" height="20" rx="5"/><circle cx="12" cy="12" r="4.500"/><path d="M17.500 6.500h.010"/></svg></a>
      <a href="#" aria-label="NDemy"><svg class="d-block mt-1" width="24" height="20"><use href="#code"/></svg></a>
    </div>
  </div></div>
</footer>
<div class="guard d-flex align-items-center justify-content-center"><svg width="22" height="24" viewBox="0 0 40 44"><path d="M20 0C12 0 5 2 0 5 0 20 3 34 20 44Z" fill="#67b279"/><path d="M20 0C28 0 35 2 40 5 40 20 37 34 20 44Z" fill="#68bc71"/><path d="M11 18 15 17 20 23 31 11Q29 16 20 29Q17 26 11 18Z" fill="#fff"/></svg></div>
</body>
</html>
